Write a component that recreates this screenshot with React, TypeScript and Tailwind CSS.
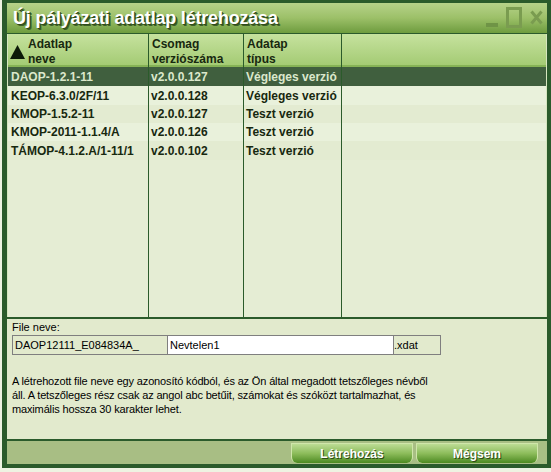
import React from "react";

type Row = { name: string; ver: string; type: string; h: string; bg: string };

const rows: Row[] = [
  { name: "DAOP-1.2.1-11", ver: "v2.0.0.127", type: "Végleges verzió", h: "h-[19px]", bg: "" },
  { name: "KEOP-6.3.0/2F/11", ver: "v2.0.0.128", type: "Végleges verzió", h: "h-[19px]", bg: "bg-[#e9f1db]" },
  { name: "KMOP-1.5.2-11", ver: "v2.0.0.127", type: "Teszt verzió", h: "h-[18px]", bg: "bg-[#e3ebd1]" },
  { name: "KMOP-2011-1.1.4/A", ver: "v2.0.0.126", type: "Teszt verzió", h: "h-[18px]", bg: "bg-[#e9f1db]" },
  { name: "TÁMOP-4.1.2.A/1-11/1", ver: "v2.0.0.102", type: "Teszt verzió", h: "h-[19px]", bg: "bg-[#e3ebd1]" },
];

const grid = "grid grid-cols-[141px_95px_98px_1fr]";
const cell = "border-r border-[#2b5b2b] px-[3px]";

function TitleButtons() {
  return (
    <div className="flex items-end gap-[8px] pr-[4px] pb-[2px]">
      <div className="w-[12px] h-[4px] bg-[#6f9446] mb-[1px]" />
      <div className="w-[16px] h-[21px] border-[3px] border-[#7a9c50]" />
      <svg width="13" height="15" viewBox="0 0 13 15" className="mb-[3px]">
        <path d="M1.5 1.5 L11.5 13.5 M11.5 1.5 L1.5 13.5" stroke="#7a9c50" strokeWidth="3" />
      </svg>
    </div>
  );
}

export default function App() {
  return (
    <div className="w-[551px] h-[472px] bg-[#eef3e2] font-['Liberation_Sans',Arial,sans-serif]">
      <div className="ml-[2px] w-[549px] h-[468px] border-l-[5px] border-r-[4px] border-t-[3px] border-b-[4px] border-[#2b5b2b] flex flex-col bg-[#2b5b2b]">
        {/* Title bar */}
        <div className="h-[30px] flex items-center justify-between bg-gradient-to-b from-[#b6d289] via-[#9cc068] to-[#6e9c3e]">
          <div className="pl-[6px] text-[18px] font-bold text-white leading-none tracking-[-0.2px] [text-shadow:1px_1px_0_#2f4d1c,2px_2px_0_#3d5e26]">
            Új pályázati adatlap létrehozása
          </div>
          <TitleButtons />
        </div>

        {/* Table */}
        <div className="mt-[1px] h-[283px] flex flex-col bg-[#e5edd4] border-l border-r border-[#d6e6bf]">
          <div className={`${grid} h-[33px] bg-gradient-to-b from-[#c6e29e] to-[#a4cb74] border-b-2 border-[#86b356] text-[12px] font-bold text-[#17280f] leading-[15px]`}>
            <div className={`${cell} flex items-start pt-[3px] pl-[2px]`}>
              <svg width="15" height="14" viewBox="0 0 15 14" className="mt-[8px] mr-[3px] shrink-0">
                <path d="M7.5 0 L15 14 L0 14 Z" fill="#0d1a08" />
              </svg>
              <div>
                Adatlap
                <br />
                neve
              </div>
            </div>
            <div className={`${cell} pt-[3px]`}>
              Csomag
              <br />
              verziószáma
            </div>
            <div className={`${cell} pt-[3px]`}>
              Adatap
              <br />
              típus
            </div>
            <div />
          </div>

          {rows.map((r, i) => (
            <div
              key={r.name}
              className={`${grid} ${r.h} ${i === 0 ? "bg-[#405f3e] text-[#dce8cc]" : `${r.bg} text-[#17280f]`} text-[12px] font-bold items-stretch`}
            >
              <div className={`${cell} flex items-center pl-[3px]`}>{r.name}</div>
              <div className={`${cell} flex items-center pl-[2px]`}>{r.ver}</div>
              <div className={`${cell} flex items-center pl-[2px]`}>{r.type}</div>
              <div />
            </div>
          ))}

          <div className={`${grid} flex-1`}>
            <div className={cell} />
            <div className={cell} />
            <div className={cell} />
            <div />
          </div>
        </div>

        {/* File panel */}
        <div className="mt-[2px] h-[120px] bg-[#e2eacd] px-[5px] pt-[2px] text-[11px] text-black">
          <div className="leading-[13px]">File neve:</div>
          <div className="mt-[1px] flex h-[20px] w-[429px] border border-[#7f7f7f]">
            <div className="w-[155px] border-r border-[#7f7f7f] bg-[#e2eacd] pl-[2px] flex items-center">DAOP12111_E084834A_</div>
            <div className="w-[226px] border-r border-[#7f7f7f] bg-white pl-[2px] flex items-center">Nevtelen1</div>
            <div className="flex-1 bg-[#e2eacd] flex items-center">.xdat</div>
          </div>
          <p className="mt-[19px] leading-[14px] w-[430px] tracking-[-0.15px]">
            A létrehozott file neve egy azonosító kódból, és az Ön által megadott tetszőleges névből áll. A tetszőleges rész csak az angol abc betűit, számokat és szóközt tartalmazhat, és maximális hossza 30 karakter lehet.
          </p>
        </div>

        {/* Button bar */}
        <div className="mt-[2px] flex-1 bg-[#a8be84] flex justify-end items-start gap-[3px] pr-[9px] pt-[2px]">
          {["Létrehozás", "Mégsem"].map((b) => (
            <button
              key={b}
              className="w-[122px] h-[20px] rounded-b-[6px] border-t border-x border-[#cfe6aa] bg-gradient-to-b from-[#bcdc94] via-[#8cbc5a] to-[#4d8a1f] text-white text-[12px] font-bold [text-shadow:1px_1px_0_#2c4a18]"
            >
              {b}
            </button>
          ))}
        </div>
      </div>
    </div>
  );
}
